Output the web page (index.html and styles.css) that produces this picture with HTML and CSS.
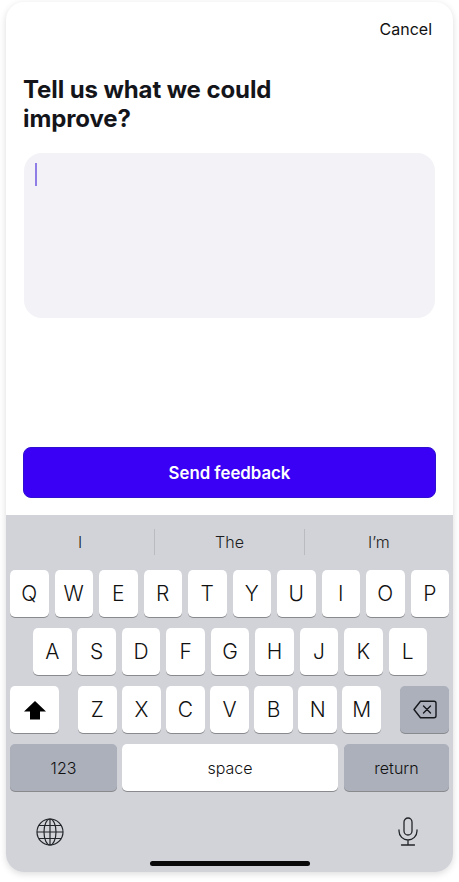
FILE: index.html
```html
<!DOCTYPE html>
<html lang="en">
<head>
    <meta charset="UTF-8">
    <meta name="viewport" content="width=device-width, initial-scale=1.0">
    <title>Feedback</title>
    <link rel="stylesheet" href="styles.css">
</head>
<body>
    <div class="sheet">
        <div class="form">
            <div class="top-bar"><span class="cancel">Cancel</span></div>
            <h1>Tell us what we could improve?</h1>
            <div class="text-box"><div class="caret"></div></div>
            <button class="send-btn">Send feedback</button>
        </div>

        <div class="keyboard">
            <div class="suggestions">
                <div class="suggestion">I</div>
                <div class="suggestion">The</div>
                <div class="suggestion">I’m</div>
            </div>

            <div class="key-row">
                <div class="key">Q</div><div class="key">W</div><div class="key">E</div><div class="key">R</div><div class="key">T</div>
                <div class="key">Y</div><div class="key">U</div><div class="key">I</div><div class="key">O</div><div class="key">P</div>
            </div>
            <div class="key-row row-middle">
                <div class="key">A</div><div class="key">S</div><div class="key">D</div><div class="key">F</div><div class="key">G</div>
                <div class="key">H</div><div class="key">J</div><div class="key">K</div><div class="key">L</div>
            </div>
            <div class="key-row row-letters">
                <div class="key key-shift">
                    <svg width="24" height="21" viewBox="0 0 24 21"><path d="M12 1 L23 11.5 H17 V19.5 H7 V11.5 H1 Z" fill="#000"/></svg>
                </div>
                <div class="letters">
                    <div class="key">Z</div><div class="key">X</div><div class="key">C</div><div class="key">V</div>
                    <div class="key">B</div><div class="key">N</div><div class="key">M</div>
                </div>
                <div class="key key-gray key-delete">
                    <svg width="24" height="19" viewBox="0 0 24 19" fill="none" stroke="#16181c" stroke-width="1.4">
                        <path d="M7.5 1.2 H21 a2 2 0 0 1 2 2 V15.8 a2 2 0 0 1 -2 2 H7.5 L1 9.5 Z" stroke-linejoin="round"/>
                        <path d="M10.5 6 L17.5 13 M17.5 6 L10.5 13" stroke-linecap="round"/>
                    </svg>
                </div>
            </div>
            <div class="key-row row-bottom">
                <div class="key key-gray key-word key-123">123</div>
                <div class="key key-word key-space">space</div>
                <div class="key key-gray key-word key-return">return</div>
            </div>

            <div class="system-row">
                <svg class="globe" width="28" height="28" viewBox="0 0 28 28" fill="none" stroke="#22252a" stroke-width="1.2">
                    <circle cx="14" cy="14" r="13"/>
                    <ellipse cx="14" cy="14" rx="6" ry="13"/>
                    <path d="M14 1 V27 M1 14 H27 M3 7.5 H25 M3 20.5 H25"/>
                </svg>
                <svg class="mic" width="20" height="29" viewBox="0 0 20 29" fill="none" stroke="#22252a" stroke-width="1.3" stroke-linecap="round">
                    <rect x="6" y="1" width="8" height="17" rx="4"/>
                    <path d="M1 13 V14 a9 9 0 0 0 18 0 V13 M10 23 V27.5 M3.5 28 H16.5"/>
                </svg>
            </div>
            <div class="home-bar"></div>
        </div>
    </div>
</body>
</html>
```

FILE: styles.css
```css
* {
    margin: 0;
    padding: 0;
    box-sizing: border-box;
    font-family: Inter, 'Liberation Sans', sans-serif;
}

body {
    width: 459px;
    height: 882px;
    background-color: #fff;
    padding: 2px 6px 10px;
    overflow: hidden;
}

.sheet {
    height: 870px;
    background-color: #fff;
    border-radius: 18px;
    box-shadow: 0 2px 7px rgba(0,0,0,0.14);
    overflow: hidden;
    display: flex;
    flex-direction: column;
}

.form {
    height: 513px;
    padding: 0 17px;
}

.top-bar {
    display: flex;
    justify-content: flex-end;
    padding: 17px 4px 0 0;
    height: 73px;
}

.cancel {
    font-size: 16px;
    line-height: 21px;
    color: #111;
}

h1 {
    width: 290px;
    font-size: 24px;
    line-height: 29px;
    font-weight: 700;
    color: #14151a;
    letter-spacing: -0.1px;
}

.text-box {
    height: 165px;
    margin: 20px 1px 0;
    padding: 10px 11px;
    background-color: #f2f2f7;
    border-radius: 18px;
}

.caret {
    width: 2px;
    height: 23px;
    background-color: #8f7ee6;
}

.send-btn {
    display: block;
    width: 100%;
    height: 51px;
    margin-top: 129px;
    background-color: #3a00f5;
    border: 1px solid #2f10d0;
    border-radius: 8px;
    color: #fff;
    font-size: 16.8px;
    font-weight: 600;
}

.keyboard {
    flex: 1;
    background-color: #d1d3d9;
    padding: 0 4px;
    position: relative;
}

.suggestions {
    display: flex;
    height: 55px;
    margin: 0 -4px;
    padding-top: 14px;
}

.suggestion {
    flex: 1;
    height: 26px;
    line-height: 26px;
    text-align: center;
    font-size: 16px;
    font-weight: 300;
    color: #1c1d20;
    border-left: 1px solid #b9bbc1;
}

.suggestion:first-child {
    border-left: none;
}

.key-row {
    display: flex;
    justify-content: space-between;
    height: 47px;
    margin-bottom: 11px;
}

.row-middle {
    padding: 0 22px 0 23px;
}

.key {
    width: 38.5px;
    height: 47px;
    background-color: #fff;
    border-radius: 5px;
    box-shadow: 0 1px 0 #898a8d;
    display: flex;
    align-items: center;
    justify-content: center;
    font-size: 21px;
    font-weight: 300;
    color: #111;
}

.letters {
    display: flex;
    justify-content: space-between;
    width: 303px;
    margin: 0 auto 0 19px;
}

.key-shift,
.key-delete {
    width: 49px;
}

.key-shift svg {
    margin-top: 2px;
}

.key-gray {
    background-color: #abb0bb;
}

.key-word {
    font-size: 16px;
    font-weight: 300;
}

.key-123 {
    width: 107px;
}

.key-return {
    width: 105px;
}

.key-space {
    width: 216px;
    margin: 0 6px 0 5px;
}

.system-row {
    display: flex;
    justify-content: space-between;
    align-items: center;
    padding: 15px 31px 0 26px;
}

.home-bar {
    position: absolute;
    left: 144px;
    bottom: 6px;
    width: 160px;
    height: 5px;
    background-color: #0a0a0a;
    border-radius: 3px;
}
```
